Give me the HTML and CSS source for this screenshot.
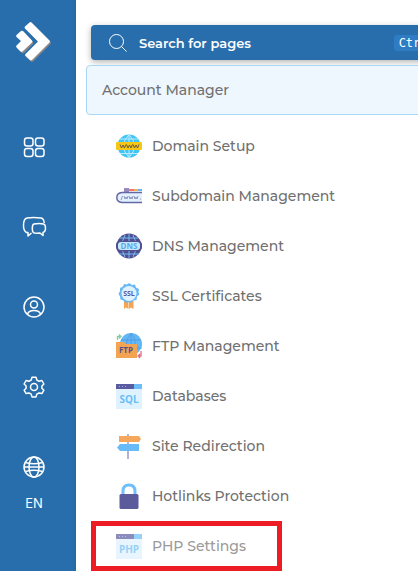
FILE: index.html
```html
<!DOCTYPE html>
<html lang="en">
<head>
  <meta charset="UTF-8">
  <meta name="viewport" content="width=device-width, initial-scale=1.0">
  <title>Account Manager</title>
  <link rel="stylesheet" href="styles.css">
</head>
<body>
  <aside class="sidebar">
    <a href="#" class="logo" aria-label="Home">
      <svg width="36" height="40" viewBox="0 0 36 40">
        <g fill="#888">
          <path d="M10.500 6L15 2q1-.8 2 0L34.500 20q.8 1 0 2L17 39.500q-1 .8-2 0l-4.500-4L23 21z"/>
          <path d="M2 14.500l4.500-4q1-.6 2 0l8.500 9.500q.8 1 0 2L8 31q-1 .6-2 0l-4-4 4.500-5.500z"/>
        </g>
        <g fill="#fff">
          <path d="M9 4.500L13.500.5q1-.8 2 0L33.500 18.500q.8 1 0 2L16 38q-1 .8-2 0l-4.500-4q-.8-1 0-2L22 19.500 9 6.500q-.8-1 0-2z"/>
          <path d="M.5 13L5 9q1-.6 2 0l9 9.500q.8 1 0 2L6.500 29.500q-1 .6-2 0l-4-4q-.6-1 0-2l4.500-4.500L.5 15q-.6-1 0-2z"/>
        </g>
      </svg>
    </a>
    <nav class="side-nav">
      <a href="#" aria-label="Dashboard">
        <svg class="line-icon" viewBox="0 0 22 22">
          <rect x="1.500" y="2" width="8.500" height="8" rx="2.500"/>
          <rect x="12.500" y="2" width="8.500" height="8" rx="2.500"/>
          <rect x="1.500" y="12.500" width="8.500" height="8" rx="2.500"/>
          <rect x="12.500" y="12.500" width="8.500" height="8" rx="2.500"/>
        </svg>
      </a>
      <a href="#" aria-label="Messages">
        <svg class="line-icon" viewBox="0 0 22 22">
          <path d="M8.500 17l-3.500 3v-3.500H3.500C1.500 15.500.5 13 .5 9.500.5 5 1.500 2.500 4 2c4-.6 9-.6 14 0 2 .3 3 1.700 3.200 5"/>
          <path d="M11 8c3-.6 7-.6 9.500 0 1.500.4 2 1.500 2 4s-.5 4-2.500 4.500v3L17 17c-2 .2-4 .2-5.500 0-1.700-.4-2.200-2-2.200-4.600 0-2.500.3-4 1.700-4.400z"/>
        </svg>
      </a>
      <a href="#" aria-label="Profile">
        <svg class="line-icon" viewBox="0 0 22 22">
          <circle cx="11" cy="11" r="10"/>
          <circle cx="11" cy="8.500" r="3.500"/>
          <path d="M4.500 18c1-3 3.500-3.500 6.500-3.500s5.500.5 6.500 3.500"/>
        </svg>
      </a>
      <a href="#" aria-label="Settings">
        <svg class="line-icon" viewBox="0 0 22 22">
          <path d="M9 1.200h4l.8 2.800 2.300 1.300 2.800-.8 2 3.500-2 2v2.200l2 2-2 3.400-2.800-.7-2.300 1.300-.8 2.700H9l-.8-2.700-2.300-1.300-2.800.7-2-3.400 2-2V10l-2-2 2-3.500 2.800.8L8.200 4z"/>
          <circle cx="11" cy="11" r="3.500"/>
        </svg>
      </a>
      <a href="#" aria-label="Language" class="lang">
        <svg class="line-icon" viewBox="0 0 22 22">
          <circle cx="11" cy="11" r="10"/>
          <ellipse cx="11" cy="11" rx="5" ry="10"/>
          <path d="M2.500 6.500q8.500 2.500 17 0M2.500 15.500q8.500-2.500 17 0M1 11h20"/>
        </svg>
        <span>EN</span>
      </a>
    </nav>
  </aside>

  <main>
    <form class="search">
      <svg class="search-icon" viewBox="0 0 18 18">
        <circle cx="7.500" cy="7.500" r="7"/>
        <path d="M12.500 12.500l5 5"/>
      </svg>
      <input type="search" aria-label="Search for pages" placeholder="Search for pages">
      <kbd>Ctrl+K</kbd>
    </form>

    <button type="button" class="section-btn">Account Manager</button>

    <ul class="menu">
      <li><a href="#">
        <svg viewBox="0 0 26 26">
          <circle cx="13" cy="13" r="11.500" fill="#3fc4f5"/>
          <path d="M13 1.500v23M4 6h18M4 20.500h18M13 1.500q-11 11.500 0 23M13 1.500q11 11.500 0 23" fill="none" stroke="#bdebff"/>
          <rect y="9" width="26" height="8" rx="1" fill="#f7c716"/>
          <path d="M4 11.500l1.500 3.500L7 12l1.500 3L10 11.500M10.500 11.500L12 15l1.500-3 1.500 3 1.500-3.500M17 11.500l1.500 3.500 1.500-3 1.500 3 1.500-3.500" fill="none" stroke="#5a5040" stroke-width=".9"/>
        </svg>
        <span>Domain Setup</span></a></li>
      <li><a href="#">
        <svg viewBox="0 0 26 26">
          <path d="M8 5h5v4H8z" fill="#9b8bbd"/>
          <path d="M13 7h5" stroke="#f5766a" stroke-width="2"/>
          <path d="M18 7h4" stroke="#f5ac60" stroke-width="2"/>
          <path d="M22 7h4" stroke="#61b9f0" stroke-width="2"/>
          <path d="M26 9.500H6Q.8 10 .8 14.500T6 19.500h20" fill="#e3f1ff" stroke="#6668a5" stroke-width="1.500"/>
          <path d="M5 17l1.500-4M8 13l1 3 1-2 1 2 1-3M13 13l1 3 1-2 1 2 1-3M18 13l1 3 1-2 1 2 1-3M24 16h1" fill="none" stroke="#7b80b5" stroke-width=".8"/>
        </svg>
        <span>Subdomain Management</span></a></li>
      <li><a href="#">
        <svg viewBox="0 0 26 26">
          <circle cx="13" cy="13" r="12.500" fill="#514f91"/>
          <path d="M13 1v24M4 5h18M3 21h20M9 2q-6 11 0 22M17 2q6 11 0 22" fill="none" stroke="#75bdf3"/>
          <rect y="8" width="26" height="10" rx="4" fill="#514f91"/>
          <rect x="2" y="9" width="22" height="8" rx="3" fill="#c5e8ff"/>
          <text x="13" y="16" class="icon-text dns-text">DNS</text>
        </svg>
        <span>DNS Management</span></a></li>
      <li><a href="#">
        <svg viewBox="0 0 26 26">
          <path d="M8 17h4.500v9L10 24.500 8 26zM13 17h4.500v9L15 24.500 13 26z" fill="#f5a451"/>
          <path d="M13 0l3 2 3-.5 1 3 3 1.500-.5 3 1 2.500-2.500 2-.5 3.500-3.500.5-2 2.500-2.500-1-3 1-2-2.500-3-1-.5-3L2.500 11 4 8l0-3 3-1.500 1-2.500 3 .5z" fill="#6ab8f4"/>
          <circle cx="13" cy="10.500" r="7.500" fill="#dff2ff"/>
          <text x="13" y="13" class="icon-text ssl-text">SSL</text>
        </svg>
        <span>SSL Certificates</span></a></li>
      <li><a href="#">
        <svg viewBox="0 0 26 26">
          <circle cx="15" cy="11" r="11" fill="#62b8f4"/>
          <path d="M15 0v22M5 7h20M6 15h20M15 0q-9 11 0 22M15 0q9 11 0 22" fill="none" stroke="#5293dc" stroke-width=".7"/>
          <path d="M1.500 7V3.500H4M3 1.500l2 2-2 2" fill="none" stroke="#82ca9f" stroke-width="1.300"/>
          <path d="M25 18v5h-2M24 21l-2 2 2 2" fill="none" stroke="#dc6f91" stroke-width="1.300"/>
          <path d="M0 9h8l2 2h11v14H0z" fill="#f2a453"/>
          <text x="10" y="20" class="icon-text ftp-text">FTP</text>
        </svg>
        <span>FTP Management</span></a></li>
      <li><a href="#">
        <svg viewBox="0 0 26 26">
          <path d="M0 1h26v25H0z" fill="#dff2ff"/>
          <path d="M0 1h18v5H0z" fill="#5b5ba0"/>
          <path d="M18 1h8v5h-8z" fill="#6bbef8"/>
          <path d="M3 3.500h7" stroke="#9ba6df" stroke-dasharray="1 2"/>
          <text x="13" y="20" class="icon-text code-text">SQL</text>
        </svg>
        <span>Databases</span></a></li>
      <li><a href="#">
        <svg viewBox="0 0 26 26">
          <path d="M12 1v25" stroke="#9b98c8" stroke-width="1.500"/>
          <path d="M3 3h20l2 3-2 3H3z" fill="#f5a75c"/>
          <path d="M23 11H4l-3 3.500L4 18h19z" fill="#68bbf7"/>
        </svg>
        <span>Site Redirection</span></a></li>
      <li><a href="#">
        <svg viewBox="0 0 26 26">
          <path d="M7 12V8q0-6 6-6t6 6v4" fill="none" stroke="#72bef8" stroke-width="3"/>
          <rect x="3.500" y="11" width="19" height="15" rx="1.500" fill="#5a5a9d"/>
        </svg>
        <span>Hotlinks Protection</span></a></li>
      <li><a href="#" class="highlight">
        <svg viewBox="0 0 26 26">
          <path d="M0 1h26v25H0z" fill="#dff2ff"/>
          <path d="M0 1h18v5H0z" fill="#5b5ba0"/>
          <path d="M18 1h8v5h-8z" fill="#6bbef8"/>
          <path d="M3 3.500h7" stroke="#9ba6df" stroke-dasharray="1 2"/>
          <text x="13" y="20" class="icon-text code-text">PHP</text>
        </svg>
        <span>PHP Settings</span></a></li>
    </ul>
  </main>
</body>
</html>
```

FILE: styles.css
```css
* {
  margin: 0;
  padding: 0;
  box-sizing: border-box;
}
body {
  display: flex;
  min-height: 100vh;
  font-family: Montserrat, 'DejaVu Sans', sans-serif;
  font-weight: 500;
  background: #fff;
  color: #707070;
}
a {
  color: inherit;
  text-decoration: none;
}
.sidebar {
  flex: 0 0 76px;
  display: flex;
  flex-direction: column;
  align-items: center;
  padding: 22px 8px 0 0;
  background: linear-gradient(to left, #2467a3, #286ead 4px);
  color: #fff;
}
.logo svg {
  display: block;
}
.side-nav {
  display: flex;
  flex-direction: column;
  gap: 58px;
  margin-top: 74px;
}
.side-nav a {
  display: flex;
  flex-direction: column;
  align-items: center;
}
.line-icon {
  width: 22px;
  height: 22px;
  fill: none;
  stroke: #fff;
  stroke-width: 1.5;
  stroke-linejoin: round;
  overflow: visible;
}
.lang span {
  margin-top: 17px;
  font: 13px/16px Inter, sans-serif;
}
main {
  flex: 1;
  min-width: 0;
  padding-top: 25px;
  overflow: hidden;
}
.search {
  display: flex;
  align-items: center;
  width: calc(100% + 34px);
  height: 35px;
  margin-left: 15px;
  padding: 0 20px 0 18px;
  border-radius: 4px;
  background: #286ead;
  box-shadow: 0 2px 6px rgba(0, 0, 0, 0.3);
}
.search-icon {
  flex: none;
  width: 18px;
  height: 18px;
  fill: none;
  stroke: #fff;
}
.search input {
  flex: 1;
  min-width: 0;
  margin-left: 12px;
  border: none;
  outline: none;
  background: none;
  color: #fff;
  font: 600 13px Montserrat, Inter, sans-serif;
}
.search input::placeholder {
  color: #fff;
  opacity: 1;
}
.search kbd {
  flex: none;
  padding: 0 5px;
  border-radius: 3px;
  background: #2e7cc4;
  color: #fff;
  font: 12px/16px 'DejaVu Sans Mono', monospace;
}
.section-btn {
  display: block;
  width: 100%;
  height: 50px;
  margin: 5px 0 6px 10px;
  padding: 0 15px;
  border: 1px solid #a9d8f7;
  border-radius: 4px;
  background: #eef6fe;
  color: inherit;
  font-family: inherit;
  font-size: 14px;
  font-weight: inherit;
  text-align: left;
  cursor: pointer;
}
.menu {
  margin-left: 15px;
  list-style: none;
}
.menu li {
  display: flex;
}
.menu a {
  display: flex;
  align-items: center;
  gap: 10px;
  height: 50px;
  padding: 0 25px;
  font-size: 14px;
  white-space: nowrap;
}
.menu svg {
  flex: none;
  width: 26px;
  height: 26px;
}
.menu .highlight {
  min-width: 191px;
  padding: 0 20px;
  border: 5px solid #ed1c24;
}
.highlight svg,
.highlight span {
  opacity: 0.7;
}
.icon-text {
  font-family: 'Open Sans', sans-serif;
  font-weight: 700;
  text-anchor: middle;
}
.dns-text {
  font-size: 8px;
  fill: #5ba8e7;
}
.ssl-text {
  font-size: 7px;
  fill: #5759a0;
}
.ftp-text {
  font-size: 8px;
  fill: #5a4f85;
}
.code-text {
  font-size: 10px;
  fill: #6bbdf5;
}
```
